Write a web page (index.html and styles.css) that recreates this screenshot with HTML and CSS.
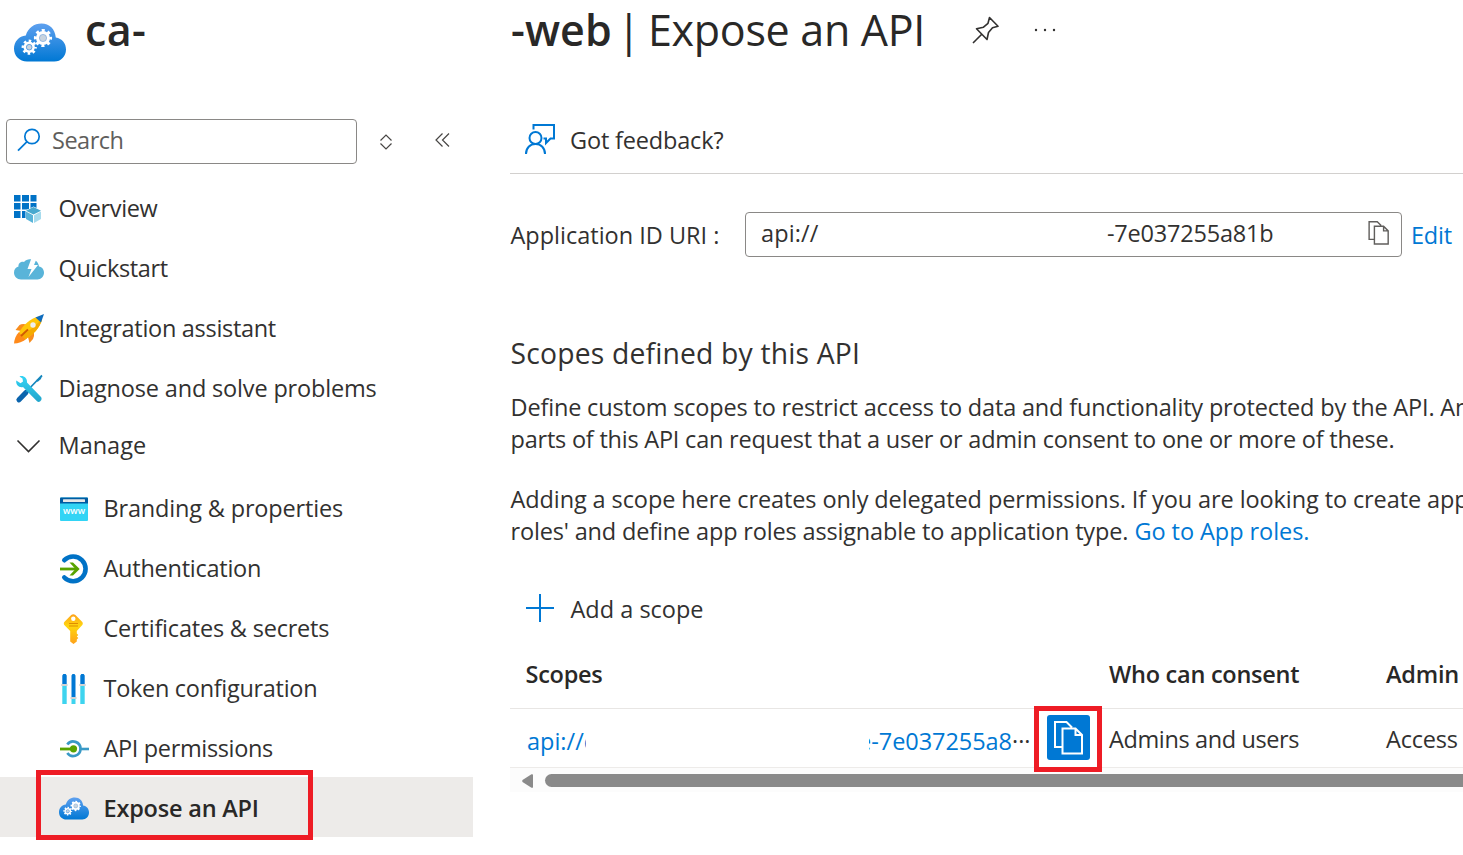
FILE: index.html
```html
<!DOCTYPE html>
<html lang="en">
<head>
<meta charset="utf-8">
<title>Expose an API</title>
<link rel="stylesheet" href="styles.css">
</head>
<body>
<svg class="defs" width="0" height="0">
  <defs>
    <linearGradient id="gCloud" x1="0" y1="0" x2="0" y2="1"><stop offset="0" stop-color="#5ea0ef"/><stop offset="1" stop-color="#0078d4"/></linearGradient>
    <linearGradient id="gCyan" x1="0" y1="0" x2="0" y2="1"><stop offset="0" stop-color="#32d4f5"/><stop offset="1" stop-color="#22a5cb"/></linearGradient>
    <linearGradient id="gKey" x1="0" y1="0" x2="0" y2="1"><stop offset="0" stop-color="#fea11b"/><stop offset=".4" stop-color="#ffd70f"/><stop offset="1" stop-color="#fea11b"/></linearGradient>
    <symbol id="cloud" viewBox="0 0 52 39">
      <path d="M13 38.5C5.500 38.500 0 33 0 25.800C0 18.500 5 13.200 11.800 12.500C14 5 20 .5 27.500 .5C35.500 .5 41 6 41.800 14.500C48 15.500 52 20.300 52 26.400C52 33 47 38.500 40.300 38.500Z" fill="url(#gCloud)"/>
      <g fill="none" stroke="#fff">
        <circle cx="29" cy="15" r="5" stroke-width="4"/><circle cx="29" cy="15" r="7.600" stroke-width="3" stroke-dasharray="3 2.970" stroke-dashoffset="1.500"/>
        <circle cx="15.200" cy="24.200" r="4.200" stroke-width="3"/><circle cx="15.200" cy="24.200" r="6.300" stroke-width="2.600" stroke-dasharray="2.500 2.450" stroke-dashoffset="1.250"/>
      </g>
      <circle cx="29" cy="15" r="3.600" fill="#c9d4df" stroke="#7ba9dc" stroke-width=".7"/><circle cx="15.200" cy="24.200" r="2.800" fill="#c9d4df" stroke="#5e9fe0" stroke-width=".9"/>
    </symbol>
    <symbol id="copy" viewBox="0 0 30 34">
      <path d="M8.500 26H1V1H12.500L18 6.500M8.500 7.500H21.500L28 14V32.500H8.500ZM21.500 7.500V14H28" fill="none" stroke="currentColor" stroke-width="2"/>
    </symbol>
  </defs>
</svg>
<header class="titlebar">
  <svg class="app-icon" width="52" height="39"><use href="#cloud"/></svg>
  <h1 class="title"><span class="name-start">ca-</span><b class="name-end">-web</b><span class="bar">|</span><span class="page-name">Expose an API</span></h1>
  <svg class="pin" width="28" height="28" viewBox="0 0 28 28" fill="none" stroke="#323130" stroke-width="1.600"><path d="M1 27L9.500 18.500M17.500 1.500L26 10.300L20.500 11.800L16.500 16.500L15 23.500L4.500 12.800L11.500 11.200L16 7.300Z" stroke-linejoin="round"/></svg>
  <svg class="more" width="22" height="4" viewBox="0 0 22 4" fill="#323130"><circle cx="2" cy="2" r="1.200"/><circle cx="11" cy="2" r="1.200"/><circle cx="20" cy="2" r="1.200"/></svg>
</header>
<div class="columns">
  <nav class="sidebar">
    <div class="tools">
      <div class="search">
        <svg width="24" height="24" viewBox="0 0 24 24" fill="none" stroke="#0078d4" stroke-width="1.700"><circle cx="15" cy="8.500" r="7.200"/><path d="M9.800 13.800L1 22.600"/></svg>
        <span class="t-search">Search</span>
      </div>
      <svg class="sort" width="12" height="16" viewBox="0 0 12 16" fill="none" stroke="#484644" stroke-width="1.200"><path d="M.5 6.500L6 1L11.500 6.500M.5 9.500L6 15L11.500 9.500"/></svg>
      <svg class="collapse" width="15" height="14" viewBox="0 0 15 14" fill="none" stroke="#484644" stroke-width="1.200"><path d="M7.500 .5L1 7L7.500 13.500M14 .5L7.500 7L14 13.500"/></svg>
    </div>
    <ul class="menu">
      <li class="item"><svg width="30" height="30" viewBox="0 0 30 30"><path d="M0 1H6.500V7.500H0ZM8 1H15V7.500H8ZM16.500 1H22.500V7.500H16.500ZM0 9H6.500V15.500H0ZM8 9H15V15.500H8ZM16.500 9H22.500V15.500H16.500ZM0 17H6.500V24H0ZM8 17H15V24H8Z" fill="#0072c6"/><path d="M19.500 12.500L28 16.500V24.500L19.500 29.500L11.500 24.500V16.500Z" fill="#fff"/><path d="M19.500 13L27 16.700L19.500 20.500L12 16.700Z" fill="#48a9cf"/><path d="M12 17.500L19 21.200V29L12 25Z" fill="#59b4d9"/><path d="M27 17.500L20 21.200V29L27 25Z" fill="#a6dbed"/></svg><span class="t-overview">Overview</span></li>
      <li class="item"><svg width="30" height="30" viewBox="0 0 30 30"><path d="M7 25.500C3 25.500 0 22.500 0 18.500C0 15 2 13 4.500 12.500C4 9.500 7 7 10 8C12 5.500 15 4.700 18 5.500C21 5 24.500 8 25 12.500C28 13 30 15.500 30 18.800C30 22.500 27 25.500 23.500 25.500Z" fill="#59b4d9"/><path d="M17.500 4L22.500 5L20 11H24L14.500 23L17.500 15H13.500Z" fill="#fff"/></svg><span class="t-quick">Quickstart</span></li>
      <li class="item"><svg width="30" height="30" viewBox="0 0 30 30"><path d="M13 10.500Q8 9.500 5.500 11L1.500 16L7 17ZM20 17.500Q20.500 22 19 25L15.500 29L14 23Z" fill="#f78d1e"/><path d="M5 18C2 21 0 26 0 29.500C4 29.500 9 28 13 24.500Z" fill="#ff8a1a"/><path d="M5 18.500C9 11 17 4 25 2.500L28 5.500C26 14 19 21 11.500 25Z" fill="#ffc60a"/><path d="M17 15L28 5.500C26 14 19 21 11.500 25L8 22Z" fill="#f5ab00"/><path d="M21.500 3.500L30 0L27 8.500Z" fill="#0f6cbd"/><circle cx="19" cy="11" r="2.700" fill="#eee"/><path d="M7 22L14 15.500" stroke="#d15b00" stroke-width="2"/></svg><span class="t-integ">Integration assistant</span></li>
      <li class="item"><svg width="30" height="30" viewBox="0 0 30 30"><path d="M5 25.800L12 18.500" stroke="#0b64ad" stroke-width="5.200" stroke-linecap="round"/><path d="M12 18L23.500 6L28 1.500" stroke="#1787bd" stroke-width="1.800" fill="none"/><path d="M22.500 6L28 1.200L27 5L23.500 8Z" fill="#1787bd"/><path d="M5.500 2.500C9 1 13.500 4 13 8.500L27 23C29 25.500 25.500 29.500 23 27.200L9 13C5 14 1.500 10.500 2.300 6.500L6.500 9.300L9 7.500L8.500 4.500Z" fill="url(#gCyan)"/></svg><span class="t-diag">Diagnose and solve problems</span></li>
      <li class="item group"><svg width="30" height="30" viewBox="0 0 30 30" fill="none" stroke="#323130" stroke-width="1.600"><path d="M3.500 9.500L14.500 20.500L25.500 9.500"/></svg><span class="t-manage">Manage</span></li>
      <li class="item sub"><svg width="30" height="30" viewBox="0 0 30 30"><rect x="1" y="3.500" width="28" height="23.500" rx="1" fill="#32d4f5"/><path d="M1 4.500Q1 3.500 2 3.500H28Q29 3.500 29 4.500V9.500H1Z" fill="#005ba1"/><rect x="4" y="5.300" width="22" height="2.800" rx=".5" fill="#e6e7e8"/><text class="www" x="15" y="20.300" text-anchor="middle">www</text></svg><span class="t-brand">Branding &amp; properties</span></li>
      <li class="item sub"><svg width="30" height="30" viewBox="0 0 30 30" fill="none"><path d="M5.300 6.200A12.400 12.400 0 1 1 5.300 23.500" stroke="#0072c6" stroke-width="4.600" stroke-linecap="round"/><path d="M1 15H19" stroke="#57a300" stroke-width="2.800"/><path d="M10.500 8.500H14L20.700 15L14 21.500H10.500L16.500 15Z" fill="#57a300"/></svg><span class="t-auth">Authentication</span></li>
      <li class="item sub"><svg width="30" height="30" viewBox="0 0 30 30"><path d="M12.200 1Q14.300 -.5 16.400 1L23.300 8Q24.300 9.500 23.300 11L17.800 17V19.500L19.300 21L17.800 22.500L19.300 24L17.800 25.500V27.500L14.500 30L11.200 27.500V17L5.300 11Q4.300 9.500 5.300 8Z" fill="url(#gKey)"/><circle cx="14.300" cy="4.700" r="2.200" fill="#fff"/><path d="M10 9.500H19M10 12H19" stroke="#e08b00" stroke-width="1"/></svg><span class="t-cert">Certificates &amp; secrets</span></li>
      <li class="item sub"><svg width="30" height="30" viewBox="0 0 30 30"><path d="M3.300 10.500H7.700V30H3.300ZM12.500 24H16.500V30H12.500ZM21.300 10.500H25.700V30H21.300Z" fill="#3ed4ef"/><path d="M3.300 1.500L4.300 0H6.700L7.700 1.500V10.500H3.300ZM12.500 1.500L13.500 0H15.500L16.500 1.500V23.500H12.500ZM21.300 1.500L22.300 0H24.700L25.700 1.500V10.500H21.300Z" fill="#0078d4"/><path d="M2.300 11H8.500M11.500 24H17.500M20.300 11H26.700" stroke="#d2d2d2" stroke-width="1.800"/></svg><span class="t-token">Token configuration</span></li>
      <li class="item sub"><svg width="30" height="30" viewBox="0 0 30 30" fill="none"><path d="M8.300 10.500A7.300 7.300 0 0 1 21.500 15A7.300 7.300 0 0 1 8.300 19" stroke="#3999c6" stroke-width="2.700"/><path d="M22 15H30" stroke="#3999c6" stroke-width="2.600"/><path d="M1 15H13" stroke="#57a300" stroke-width="2.800"/><circle cx="14.500" cy="14.800" r="3.600" fill="#57a300"/></svg><span class="t-perm">API permissions</span></li>
      <li class="item sub active"><svg width="30" height="23"><use href="#cloud"/></svg><span class="t-expose">Expose an API</span><i class="callout callout-menu"></i></li>
    </ul>
  </nav>
  <main class="main">
    <div class="feedback">
      <svg width="32" height="32" viewBox="0 0 32 32" fill="none" stroke="#0078d4" stroke-width="2"><circle cx="11.500" cy="15" r="6"/><path d="M2 31C2 25 6 21 11.500 21S21 25 21 31M9.500 6.500V2H30V15.500H26.500L22 20V15.500H19.500"/></svg>
      <span class="t-feed">Got feedback?</span>
    </div>
    <div class="uri">
      <span class="uri-label">Application ID URI :</span>
      <div class="uri-box"><span class="t-api">api://</span><span class="t-id">-7e037255a81b</span><svg width="22" height="24"><use href="#copy"/></svg></div>
      <a class="t-edit">Edit</a>
    </div>
    <h2 class="heading">Scopes defined by this API</h2>
    <p class="para"><span class="l1">Define custom scopes to restrict access to data and functionality protected by the API. An</span><br><span class="l2">parts of this API can request that a user or admin consent to one or more of these.</span></p>
    <p class="para"><span class="l3">Adding a scope here creates only delegated permissions. If you are looking to create app</span><br><span class="l4">roles' and define app roles assignable to application type.</span> <a class="l5">Go to App roles.</a></p>
    <div class="add">
      <svg width="28" height="28" viewBox="0 0 28 28" stroke="#0078d4" stroke-width="2"><path d="M14 0V28M0 14H28"/></svg>
      <span class="t-add">Add a scope</span>
    </div>
    <div class="row head"><span class="t-scopes">Scopes</span><span class="t-who">Who can consent</span><span class="t-admin">Admin</span></div>
    <div class="row data">
      <div class="scope"><a class="clip-start">api://c</a><a class="clip-end">e-7e037255a8</a><span class="dots">···</span><span class="copy-btn"><svg width="30" height="34"><use href="#copy"/></svg><i class="callout callout-copy"></i></span></div>
      <span class="t-users">Admins and users</span><span class="t-access">Access</span>
    </div>
    <div class="scrollbar"><svg width="12" height="14" viewBox="0 0 12 14"><path d="M.5 6Q0 7 .5 8L9.500 13.700Q11 14.200 11 13V1Q11 -.2 9.500 .3Z" fill="#8a8a8a"/></svg><div class="thumb"></div></div>
  </main>
</div>
</body>
</html>
```

FILE: styles.css
```css
* { box-sizing: border-box; }
body { margin: 0; width: 1463px; height: 855px; overflow: hidden; background: #fff; color: #323130; font: 23.5px/32px "Open Sans", "Noto Sans", sans-serif; white-space: nowrap; }
svg { flex: none; display: block; }
.defs { position: absolute; }
h1, h2, p, ul { margin: 0; padding: 0; font-weight: 400; }
a { color: #0078d4; }

.titlebar { display: flex; height: 119px; padding-left: 14px; align-items: flex-start; color: #292827; }
.app-icon { margin-top: 23px; }
.title { display: flex; width: 906px; margin-left: 19px; font-size: 43px; line-height: 60px; }
.name-start { width: 426px; font-weight: 600; letter-spacing: .4px; }
.name-end { width: 106px; font-weight: 600; letter-spacing: .1px; }
.bar { width: 31px; }
.page-name { letter-spacing: -.3px; }
.pin { margin: 16px 0 0 -19px; }
.more { margin: 28px 0 0 34px; }

.columns { display: flex; }
.sidebar { width: 473px; flex: none; }
.tools { display: flex; height: 58px; padding-left: 6px; }
.search { display: flex; width: 351px; height: 45px; padding: 0 0 3px 10px; gap: 11px; align-items: center; border: 1px solid #8a8886; border-radius: 4px; color: #605e5c; }
.sort { margin: 15px 0 0 23px; }
.collapse { margin: 14px 0 0 43px; }
.menu { list-style: none; }
.item { display: flex; height: 60px; padding: 3px 0 0 14px; gap: 14.5px; align-items: center; }
.item span { padding-bottom: 2px; }
.item.group { height: 54px; margin-bottom: 6px; }
.item.sub { padding-left: 59px; gap: 14.5px; }
.item.active { position: relative; padding-top: 2px; background: #edebe9; color: #292827; font-weight: 600; }
.item.active span { padding-bottom: 0; }
.www { font: 600 9px "Open Sans", sans-serif; fill: #fff; }
.callout { position: absolute; border: 5px solid #ee1c25; }
.callout-menu { left: 36px; top: -7px; width: 277px; height: 70px; }

.main { flex: 1; min-width: 0; margin-left: 37px; overflow: hidden; }
.feedback { display: flex; height: 55px; padding: 4px 0 0 14px; gap: 14px; border-bottom: 1px solid #d2d0ce; }
.feedback span { margin-top: 1px; }
.uri { display: flex; height: 45px; margin-top: 38px; align-items: center; }
.uri-label { width: 235px; padding-left: .5px; }
.uri-box { display: flex; width: 657px; height: 45px; padding: 4px 0 0 15px; border: 1px solid #8a8886; border-radius: 4px; }
.t-api { width: 346px; letter-spacing: .1px; }
.t-id { width: 261px; }
.uri-box svg { margin-top: 4px; color: #605e5c; }
.t-edit { margin-left: 9px; }
.heading { margin-top: 77px; padding-left: .5px; font-size: 28.3px; line-height: 38px; letter-spacing: .18px; }
.para { margin-top: 19px; padding-left: .5px; }
.para + .para { margin-top: 28px; }
.add { display: flex; height: 32px; margin-top: 46px; padding-left: 16px; gap: 16.5px; }
.add svg { margin-top: 1px; }
.row { display: grid; grid-template-columns: 599px 277px 77px; }
.head { height: 67px; margin-top: 17px; padding-top: 16px; border-bottom: 1px solid #e8e6e4; color: #292827; font-weight: 600; }
.head span:first-child { padding-left: 15.5px; }
.data { height: 59px; padding-top: 14px; border-bottom: 1px solid #edebe9; }
.scope { display: flex; padding: 2px 0 0 17px; }
.clip-start { width: 59px; overflow: hidden; }
.clip-end { display: flex; justify-content: flex-end; width: 143.5px; margin-left: 282.500px; overflow: hidden; letter-spacing: -.05px; }
.dots { width: 35px; }
.copy-btn { position: relative; width: 43px; height: 45px; margin-top: -10px; padding: 6px 0 0 7px; border-radius: 3px; background: #0078d4; color: #fff; }
.callout-copy { left: -13px; top: -9px; width: 68px; height: 66px; }
.scrollbar { display: flex; height: 24px; padding: 6px 0 0 12px; background: #fcfcfc; }
.thumb { width: 960px; height: 13px; margin-left: 11px; flex: none; border-radius: 7px; background: #8a8a8a; }

/* Tracking per label */
.t-search { letter-spacing: -.5px; }
.t-overview, .t-users { letter-spacing: -.38px; }
.t-quick, .t-perm { letter-spacing: -.35px; }
.t-integ, .t-token { letter-spacing: -.3px; }
.t-auth, .t-scopes, .t-who { letter-spacing: -.25px; }
.t-cert, .t-id, .t-edit, .t-access, .t-admin, .t-expose { letter-spacing: -.2px; }
.t-diag, .t-brand, .t-feed { letter-spacing: -.17px; }
.l1 { letter-spacing: -.17px; }
.l2 { letter-spacing: -.22px; }
.l3 { letter-spacing: -.1px; }
.l4 { letter-spacing: -.16px; }
.l5 { letter-spacing: -.05px; }
```
